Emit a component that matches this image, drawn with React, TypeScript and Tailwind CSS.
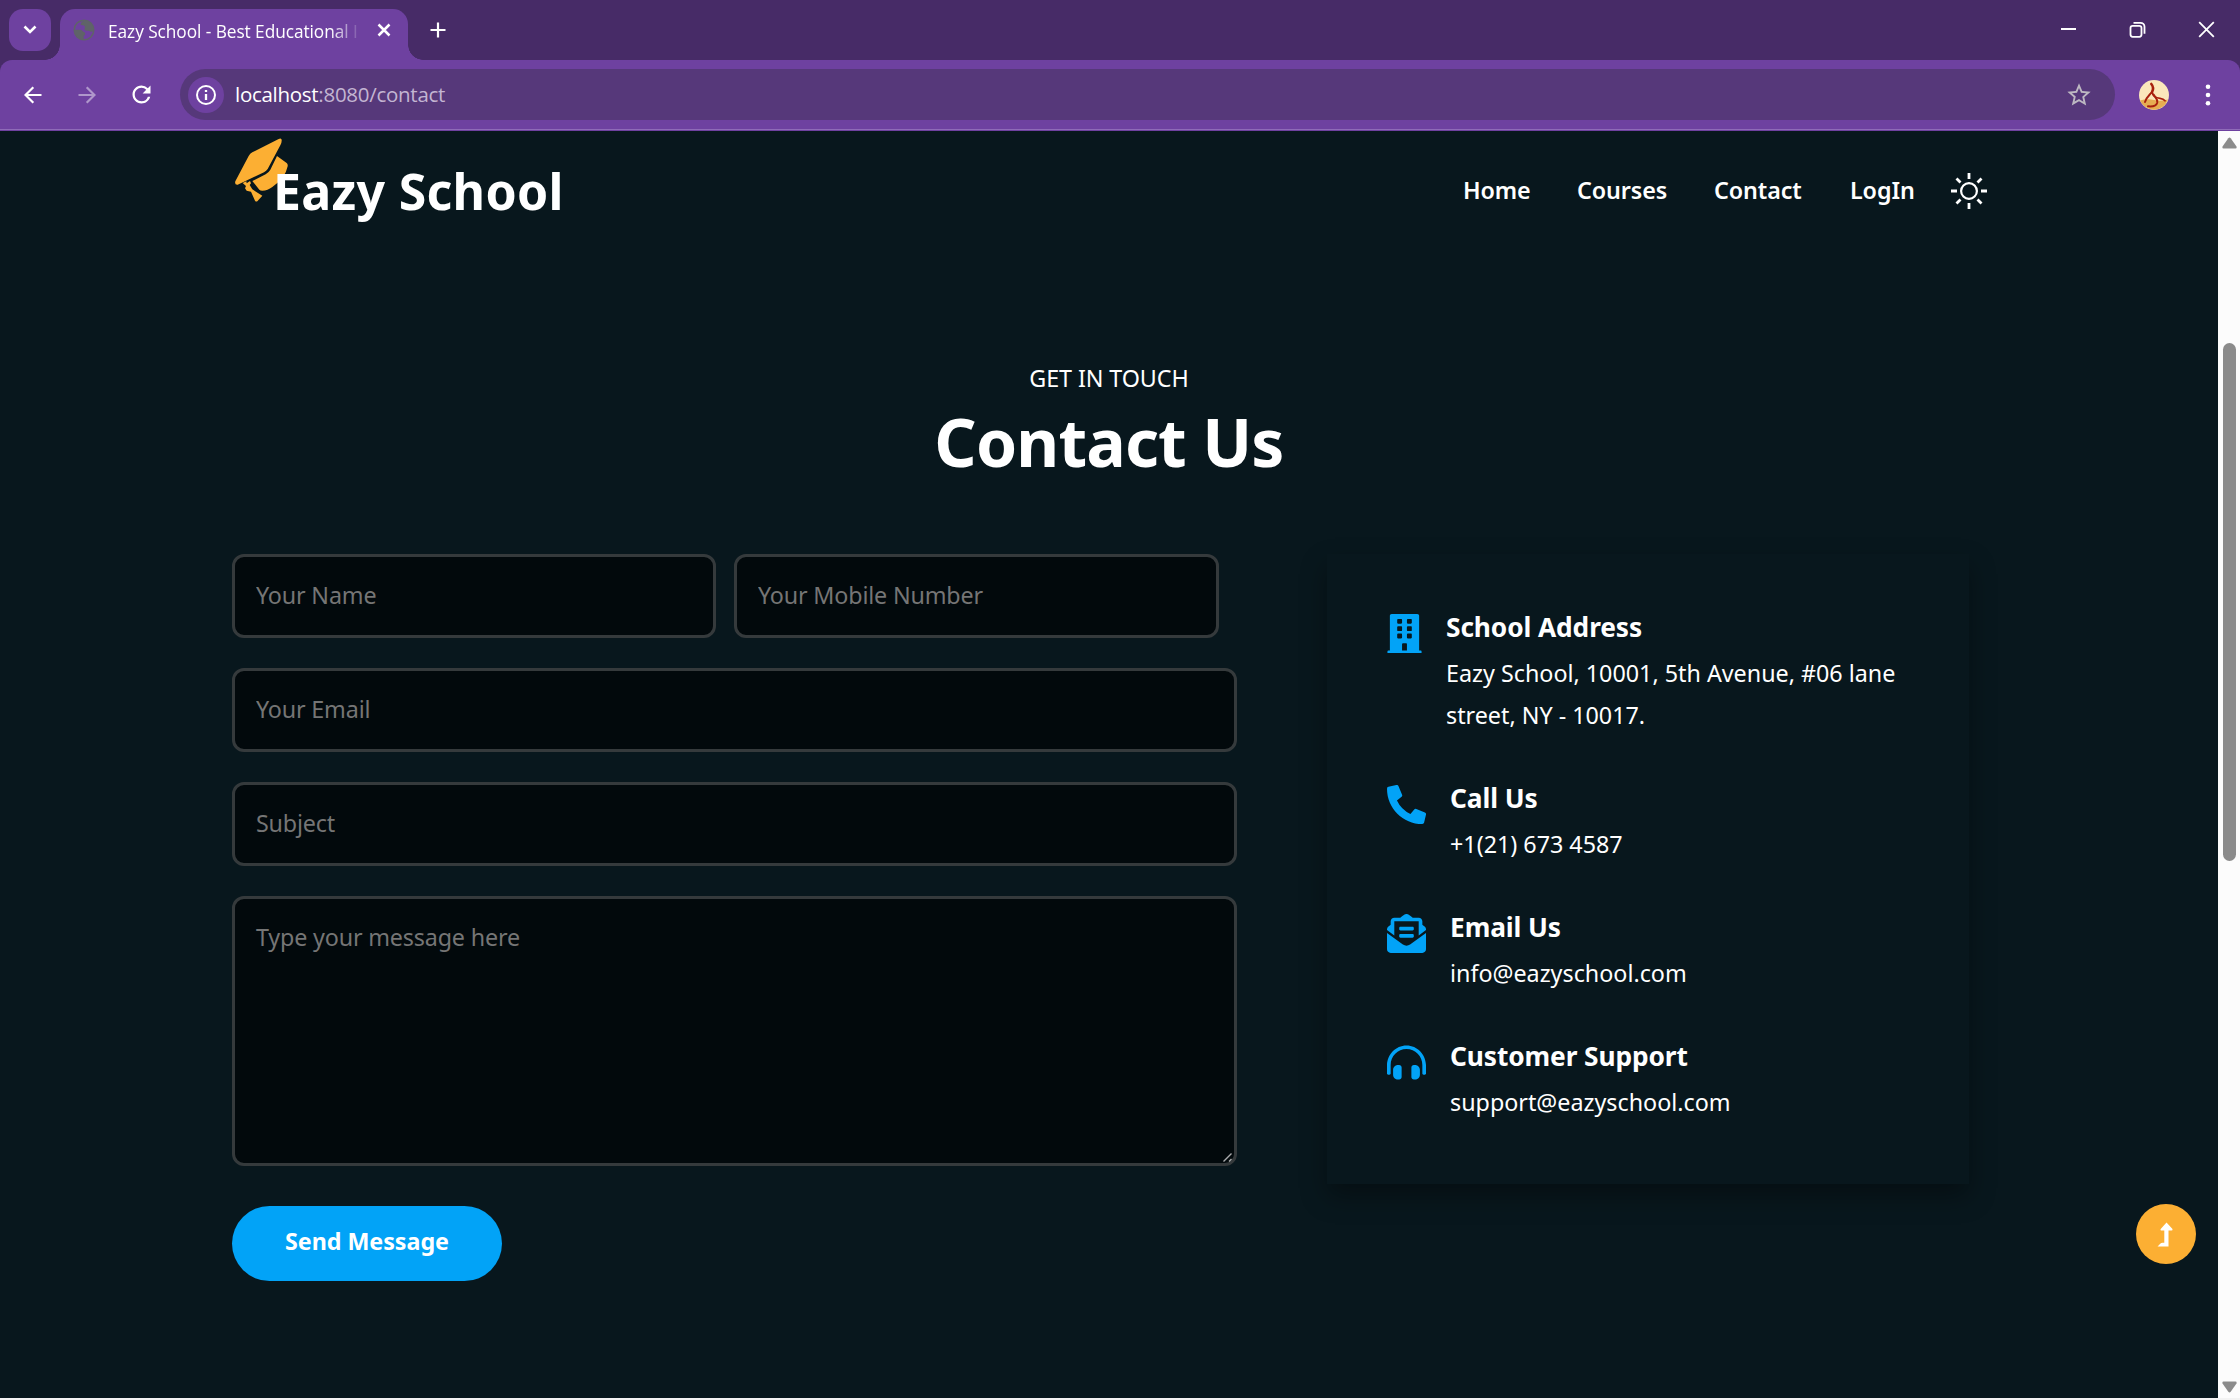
import React from "react";
import { FaBuilding, FaEnvelopeOpenText, FaHeadphonesAlt, FaPhoneAlt } from "react-icons/fa";
import { MdStarBorder, MdRefresh } from "react-icons/md";

function TabStrip() {
  return (
    <div className="flex h-[60px] shrink-0 items-start bg-[#472b67]">
      <button className="ml-[9px] mt-[9px] flex h-[42px] w-[42px] items-center justify-center rounded-[14px] bg-[#6e41a0]">
        <svg width="14" height="10" viewBox="0 0 14 10" fill="none" stroke="#fff" strokeWidth="2.6">
          <path d="M1.5 1.5 7 7l5.500-5.500" />
        </svg>
      </button>
      <div className="relative ml-[9px] mt-[9px] flex h-[51px] w-[348px] items-center rounded-t-[15px] bg-[#6e41a0] pb-[9px]">
        <span className="absolute bottom-0 left-[-15px] h-[15px] w-[15px] bg-[radial-gradient(circle_at_0_0,transparent_14.500px,#6e41a0_15px)]" />
        <span className="absolute bottom-0 right-[-15px] h-[15px] w-[15px] bg-[radial-gradient(circle_at_100%_0,transparent_14.500px,#6e41a0_15px)]" />
        <svg className="ml-[13px]" width="22" height="22" viewBox="0 0 22 22">
          <circle cx="11" cy="11" r="9.800" fill="none" stroke="#5f6368" strokeWidth="1.500" />
          <path d="M12.500 1.500C9.500 2 8 3.200 7.500 5.500c1.200 1.200 3 .4 4.200 1.600.6 1.500-.6 2.700 0 4 1.500 1.200 3 .2 4.500.9 1 .7 2.300.9 4.300.3A9.800 9.800 0 0 0 12.500 1.500Z" fill="#5f6368" />
          <path d="M1.500 10.800h6.300c1.700.1 1.700 2.200 3.700 2.500 1.200 1.300 1 3-.8 3.500V20.500A9.800 9.800 0 0 1 1.500 10.800Z" fill="#5f6368" />
        </svg>
        <div className="ml-[13px] mt-[4px] w-[250px] overflow-hidden whitespace-nowrap font-['Open_Sans',sans-serif] text-[17.3px] leading-[28px] tracking-[-0.06px] text-white [mask-image:linear-gradient(to_right,#000_222px,transparent_254px)]">
          Eazy School - Best Educational I
        </div>
        <svg className="ml-[19px]" width="14" height="14" viewBox="0 0 14 14" stroke="#fff" strokeWidth="2.500">
          <path d="M1.500 1.500l11 11M12.500 1.500l-11 11" />
        </svg>
      </div>
      <svg className="ml-[22px] mt-[22px]" width="16" height="16" viewBox="0 0 16 16" stroke="#fff" strokeWidth="2.200">
        <path d="M8 .5v15M.5 8h15" />
      </svg>
      <div className="ml-auto mr-[25px] mt-[21px] flex items-center gap-[52px]">
        <svg width="17" height="17" viewBox="0 0 17 17" stroke="#fff" strokeWidth="2">
          <path d="M1 8h15" />
        </svg>
        <svg width="17" height="17" viewBox="0 0 17 17" fill="none" stroke="#fff" strokeWidth="1.800">
          <rect x="1.500" y="4.800" width="11" height="11" rx="2.200" />
          <path d="M4.500 1.800H11.500a4 4 0 0 1 4 4v7" />
        </svg>
        <svg width="17" height="17" viewBox="0 0 17 17" stroke="#fff" strokeWidth="1.800">
          <path d="M1.200 1.200l14.600 14.600M15.800 1.200 1.200 15.800" />
        </svg>
      </div>
    </div>
  );
}

function Arrow({ className }: { className?: string }) {
  return (
    <svg className={className} width="18" height="18" viewBox="0 0 18 18" fill="none" stroke="#fff" strokeWidth="2.200">
      <path d="M17.500 9H2M9.300 1.200 1.500 9l7.800 7.800" />
    </svg>
  );
}

function Toolbar() {
  return (
    <div className="bg-[#472b67]">
      <div className="flex h-[71px] items-center rounded-t-[12px] border-b-[1px] border-[#6e41a0] bg-[#6e41a0] pb-px shadow-[inset_0_-1px_0_#8f6bb8]">
        <Arrow className="ml-[24px]" />
        <Arrow className="ml-[36px] rotate-180 opacity-45" />
        <MdRefresh className="ml-[32px] size-[27px] text-white" />
        <div className="ml-[25px] flex h-[51px] w-[1935px] items-center rounded-full bg-[#56387a] pl-[8px] pr-[22px]">
          <span className="flex size-[36px] items-center justify-center rounded-full bg-[#6e41a0]">
            <svg width="20" height="20" viewBox="0 0 20 20" fill="none" stroke="#fff" strokeWidth="2">
              <circle cx="10" cy="10" r="9" />
              <path d="M10 9v6M10 5v2" strokeWidth="2.300" />
            </svg>
          </span>
          <div className="ml-[11px] mt-[-2px] font-['Open_Sans',sans-serif] text-[20.5px] leading-[30px] tracking-[-0.28px] text-white">
            localhost<span className="text-[#c3b5d2]">:8080/contact</span>
          </div>
          <MdStarBorder className="ml-auto size-[28px] text-[#bdb8c2]" />
        </div>
        <svg className="ml-[24px]" width="30" height="30" viewBox="0 0 30 30">
          <circle cx="15" cy="15" r="15" fill="#fbe7bb" />
          <path d="M1 20.500Q8 18.500 15 20t14-.5A15 15 0 0 1 1 20.500Z" fill="#e6ad52" />
          <g fill="none" stroke="#a8200e" strokeLinecap="round">
            <path d="M12.300 4c2.200 2.500 2.200 5.500.6 8.500" strokeWidth="2.600" />
            <path d="M12.900 12C10.500 15 7.500 17 6 22" strokeWidth="1.900" />
            <path d="M13 11.500c.5 4.500 4.500 6.500 8 6.800 2 .2 4 1 5 2.500" strokeWidth="1.700" />
            <path d="M14.500 14.500c1.500 3 4.500 4.500 3.800 8C17.500 25.500 13.500 26.800 9 26.300" strokeWidth="2" />
          </g>
        </svg>
        <svg className="ml-[36px]" width="6" height="22" viewBox="0 0 6 22" fill="#fff">
          <circle cx="3" cy="2.700" r="2.300" />
          <circle cx="3" cy="11" r="2.300" />
          <circle cx="3" cy="19.300" r="2.300" />
        </svg>
      </div>
    </div>
  );
}

function SunIcon() {
  return (
    <svg className="mr-[-1px]" width="36" height="36" viewBox="0 0 36 36" fill="none" stroke="#fff" strokeWidth="2.800">
      <circle cx="18" cy="18" r="7.900" strokeWidth="2.200" />
      <path d="M18 0v6M18 30v6M0 18h6M30 18h6M5.500 5.500l4 4M26.500 26.500l4 4M5.500 30.500l4-4M26.500 9.500l4-4" />
    </svg>
  );
}

function SiteHeader() {
  const links = [
    { label: "Home", cls: "w-[114px]" },
    { label: "Courses", cls: "w-[137px]" },
    { label: "Contact", cls: "w-[136px]" },
    { label: "LogIn", cls: "w-[101px]" },
  ];
  return (
    <header className="flex h-[120px] items-center">
      <a className="relative ml-[41px] mt-[-1px] whitespace-nowrap text-[50px] font-bold leading-[70px] tracking-[0.3px]">
        <svg className="absolute left-[-38px] top-[-18px]" width="54" height="65" viewBox="705 412 162 195" fill="#fcaf33">
          <path d="M845 420 Q846 411 836 415L757 455Q750 459 746 466L706 542Q703 553 713 552L792 515Q799 511 803 505L841 434Q845 427 845 420Z" />
          <path d="M831 466 860 487Q864 490 863 497 856 533 817 559 803 570 787 570 781 570 778 567L757 541 797 521Q806 516 811 507Z" />
          <path d="M728 547 739 542 740 548 750 541 753 548 749 553 757 566 787 585 772 602Q768 604 765 600L753 573 740 570 735 563 738 556Z" />
        </svg>
        <span className="relative">Eazy School</span>
      </a>
      <nav className="ml-auto flex items-center text-[23.3px] font-semibold leading-[36px] tracking-[-0.1px]">
        {links.map((l) => (
          <a key={l.label} className={`mt-[-2px] ${l.cls}`}>{l.label}</a>
        ))}
        <SunIcon />
      </nav>
    </header>
  );
}

const field =
  "block rounded-[12px] border-[3px] border-[#353a3c] bg-[#02090c] pl-[21px] placeholder:text-[#757575] placeholder:opacity-100 outline-none tracking-[-0.17px]";

function ContactForm() {
  return (
    <form className="flex w-[1005px] flex-col gap-[30px] text-[23.3px]">
      <div className="flex gap-[18px]">
        <input className={`${field} h-[84px] w-[484px] pb-[2px]`} placeholder="Your Name" />
        <input className={`${field} h-[84px] w-[485px] pb-[2px]`} placeholder="Your Mobile Number" />
      </div>
      <input className={`${field} h-[84px] w-full pb-[2px]`} placeholder="Your Email" />
      <input className={`${field} h-[84px] w-full pb-[2px]`} placeholder="Subject" />
      <div className="relative">
        <textarea className={`${field} h-[270px] w-full resize-none pt-[20px] leading-[36px]`} placeholder="Type your message here" />
        <svg className="absolute bottom-[4px] right-[5px]" width="9" height="9" viewBox="0 0 9 9" stroke="#a9abac" strokeWidth="1.400">
          <path d="M.5 8.500l8-8M6 8.500 8.500 6" />
        </svg>
      </div>
      <button type="button" className="mt-[10px] h-[75px] w-[270px] rounded-full bg-[#02a3f7] pb-[5px] text-[23.3px] font-bold tracking-[-0.06px]">
        Send Message
      </button>
    </form>
  );
}

const contacts = [
  { Icon: FaBuilding, box: "w-[34px] mr-[25px]", title: "School Address", lines: ["Eazy School, 10001, 5th Avenue, #06 lane", "street, NY - 10017."] },
  { Icon: FaPhoneAlt, box: "w-[39px] mr-[24px]", title: "Call Us", lines: ["+1(21) 673 4587"] },
  { Icon: FaEnvelopeOpenText, box: "w-[39px] mr-[24px]", title: "Email Us", lines: ["info@eazyschool.com"] },
  { Icon: FaHeadphonesAlt, box: "w-[39px] mr-[24px]", title: "Customer Support", lines: ["support@eazyschool.com"] },
];

function ContactCard() {
  return (
    <aside className="ml-[90px] flex h-[630px] w-[642px] flex-col gap-[45px] pl-[60px] pt-[52px] shadow-[0_12px_24px_rgba(0,0,0,0.35)]">
      {contacts.map(({ Icon, box, title, lines }) => (
        <div key={title} className="flex items-start">
          <span className={`mt-[8px] flex justify-center text-[#02a3f7] ${box}`}>
            <Icon className="size-[39px] shrink-0" />
          </span>
          <div>
            <h3 className="text-[26.3px] font-bold leading-[42px] tracking-[-0.1px]">{title}</h3>
            {lines.map((line) => (
              <p key={line} className="relative top-[4px] whitespace-nowrap text-[23.3px] leading-[42px]">{line}</p>
            ))}
          </div>
        </div>
      ))}
    </aside>
  );
}

function Scrollbar() {
  return (
    <div className="flex w-[22px] shrink-0 flex-col items-center bg-[#fcfcfc] text-[#8b8b8b]">
      <svg className="mt-[6px]" width="15" height="12" viewBox="0 0 15 12" fill="currentColor">
        <path d="M6.300 1.200Q7.500-.4 8.700 1.200L14.500 9.500Q15 11.500 13.500 11.500H1.500Q0 11.500.5 9.500Z" />
      </svg>
      <div className="mt-[194px] h-[518px] w-[13px] rounded-full bg-[#8b8b8b]" />
      <svg className="mb-[5px] mt-auto" width="15" height="12" viewBox="0 0 15 12" fill="currentColor">
        <path d="M6.300 10.800Q7.500 12.400 8.700 10.800L14.500 2.500Q15 .5 13.500.5H1.500Q0 .5.5 2.500Z" />
      </svg>
    </div>
  );
}

export default function App() {
  return (
    <div className="flex h-[1400px] w-[2240px] flex-col overflow-hidden bg-[#f3f3f3]">
      <TabStrip />
      <Toolbar />
      <div className="flex h-[1267px]">
        <main className="relative w-[2218px] bg-[#08171d] px-[232px] font-['Noto_Sans',sans-serif] text-white">
          <SiteHeader />
          <section className="mt-[109px]">
            <p className="text-center text-[23.3px] leading-[36px] tracking-[-0.08px]">GET IN TOUCH</p>
            <h1 className="mt-[5px] text-center text-[66px] font-bold leading-[80px] tracking-[-0.83px]">Contact Us</h1>
            <div className="mt-[73px] flex items-start">
              <ContactForm />
              <ContactCard />
            </div>
          </section>
          <button className="absolute right-[22px] top-[1073px] flex size-[60px] items-center justify-center rounded-full bg-[#fcaf33]">
            <svg className="mr-[2px]" width="16" height="25" viewBox="0 0 16 25" fill="#fff">
              <path d="M9.500.5 15.500 7Q15.800 8.500 14.500 8.500H11.500V24.500H.5L3.500 21.500Q4.200 20.700 5.500 20.700H7.300V8.500H4Q3 8 3.700 7Z" />
            </svg>
          </button>
        </main>
        <Scrollbar />
      </div>
    </div>
  );
}
